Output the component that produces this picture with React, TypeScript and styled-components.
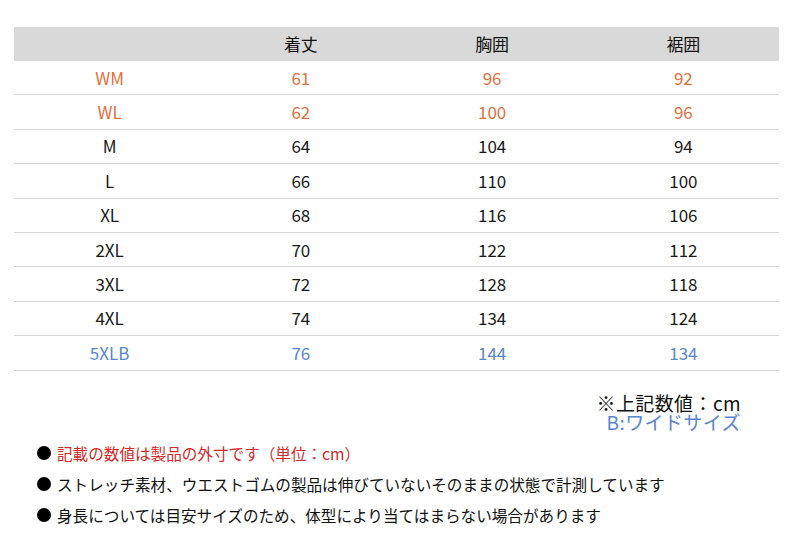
import * as React from 'react'
import styled, { createGlobalStyle } from 'styled-components'

const GlobalStyle = createGlobalStyle`
body {
  margin: 0;
  background: #ffffff;
  font-family: 'Noto Sans CJK JP', 'Noto Sans', sans-serif;
  color: #1a1a1a;
}
`

const Page = styled.div`
width: 800px;
height: 550px;
padding-top: 27px;
box-sizing: border-box;
`

const SizeTable = styled.table`
margin-left: 14px;
width: 765px;
border-collapse: collapse;
table-layout: fixed;
font-size: 17px;
line-height: 22px;
`

const HeadCell = styled.th`
background-color: #d9d9d9;
height: 34px;
padding: 0;
font-weight: normal;
text-align: center;
color: #111;
`

const Row = styled.tr`
border-bottom: 1px solid #d6d6d6;
`

const Cell = styled.td<{ $tone?: 'orange' | 'blue' }>`
height: 33.4px;
padding: 0;
text-align: center;
vertical-align: middle;
color: ${p => (p.$tone === 'orange' ? '#e2703f' : p.$tone === 'blue' ? '#5a86cc' : '#1a1a1a')};
`

const UnitNote = styled.div`
display: flex;
flex-direction: column;
align-items: flex-end;
padding-right: 59px;
margin-top: 22px;
font-size: 19px;
line-height: 19px;
letter-spacing: 0.4px;
`

const UnitLine = styled.span<{ $blue?: boolean }>`
color: ${p => (p.$blue ? '#5a86cc' : '#111')};
`

const Notes = styled.ul`
list-style: none;
margin: 11px 0 0 37px;
padding: 0;
display: flex;
flex-direction: column;
gap: 9px;
font-size: 15.6px;
line-height: 22px;
`

const Note = styled.li<{ $red?: boolean }>`
display: flex;
align-items: center;
gap: 6px;
color: ${p => (p.$red ? '#d42a2a' : '#111')};
`

const Dot = styled.span`
width: 14px;
height: 14px;
border-radius: 50%;
background: #000;
flex: 0 0 14px;
`

type Tone = 'orange' | 'blue' | undefined

const rows: { size: string; vals: number[]; tone: Tone }[] = [
  { size: 'WM', vals: [61, 96, 92], tone: 'orange' },
  { size: 'WL', vals: [62, 100, 96], tone: 'orange' },
  { size: 'M', vals: [64, 104, 94], tone: undefined },
  { size: 'L', vals: [66, 110, 100], tone: undefined },
  { size: 'XL', vals: [68, 116, 106], tone: undefined },
  { size: '2XL', vals: [70, 122, 112], tone: undefined },
  { size: '3XL', vals: [72, 128, 118], tone: undefined },
  { size: '4XL', vals: [74, 134, 124], tone: undefined },
  { size: '5XLB', vals: [76, 144, 134], tone: 'blue' },
]

const notes = [
  { text: '記載の数値は製品の外寸です（単位：cm）', red: true },
  { text: 'ストレッチ素材、ウエストゴムの製品は伸びていないそのままの状態で計測しています', red: false },
  { text: '身長については目安サイズのため、体型により当てはまらない場合があります', red: false },
]

export default function App() {
  return (
    <Page>
      <GlobalStyle />
      <SizeTable>
        <thead>
          <tr>
            <HeadCell></HeadCell>
            <HeadCell>着丈</HeadCell>
            <HeadCell>胸囲</HeadCell>
            <HeadCell>裾囲</HeadCell>
          </tr>
        </thead>
        <tbody>
          {rows.map(r => (
            <Row key={r.size}>
              <Cell $tone={r.tone}>{r.size}</Cell>
              {r.vals.map((v, i) => (
                <Cell key={i} $tone={r.tone}>{v}</Cell>
              ))}
            </Row>
          ))}
        </tbody>
      </SizeTable>
      <UnitNote>
        <UnitLine>※上記数値：cm</UnitLine>
        <UnitLine $blue>B:ワイドサイズ</UnitLine>
      </UnitNote>
      <Notes>
        {notes.map(n => (
          <Note key={n.text} $red={n.red}>
            <Dot />
            {n.text}
          </Note>
        ))}
      </Notes>
    </Page>
  )
}
